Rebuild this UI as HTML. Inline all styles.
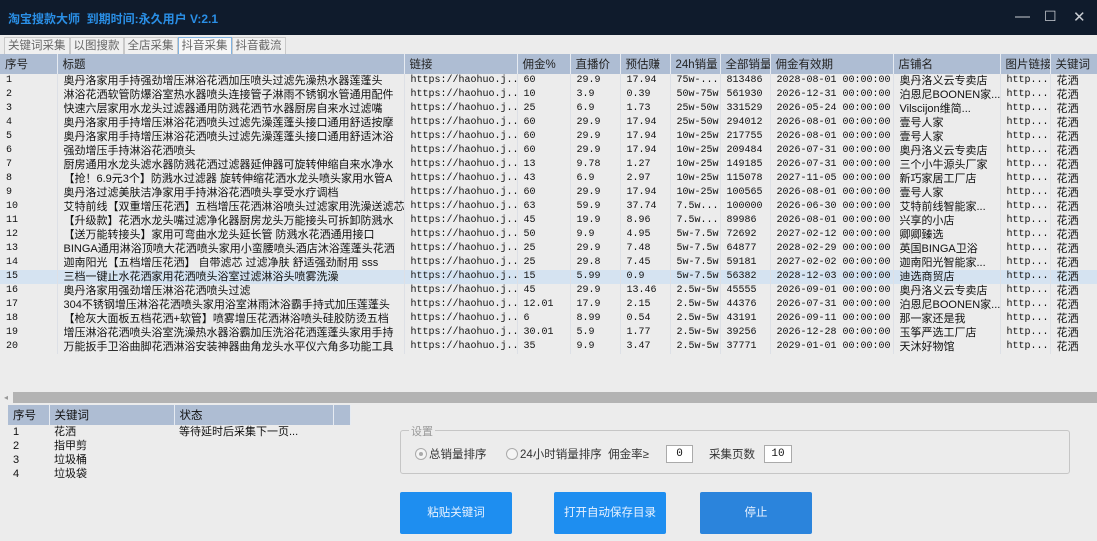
<!DOCTYPE html>
<html><head><meta charset="utf-8"><style>
*{margin:0;padding:0;box-sizing:border-box}
body{width:1097px;height:541px;overflow:hidden;background:#ececec;font-family:"Liberation Sans","Noto Sans CJK SC",sans-serif;position:relative;color:#111}
.tb{position:absolute;left:0;top:0;width:1097px;height:35px;background:#0f1b2c}
.tb .t{position:absolute;left:8px;top:10px;color:#2a8fe6;font-size:12px;font-weight:bold}
.tb .c{position:absolute;top:8px;color:#c8ccd2;font-size:15px}
.tabs{position:absolute;left:4px;top:37px;height:17px;display:flex}
.tabs div{border:1px solid #c9c9c9;border-bottom:none;font-size:11.5px;color:#666;padding:0 3px;height:17px;line-height:16px;background:#f0f0f0}
.tabs .a{border-color:#7fb2e0;background:#f7f7f7}
table{border-collapse:collapse;table-layout:fixed;position:absolute;font-size:12px}
th,td{white-space:nowrap;overflow:hidden}
#m{left:0;top:54px;width:1097px}
#m th{background:#aebdd3;font-weight:normal;text-align:left;height:20px;padding-left:5px;border-right:1px solid #e6ebf2;font-size:11.5px;color:#222}
#m td{height:14px;line-height:14px;padding-left:6px;border-right:1px solid #dde0e6;font-size:10px;font-family:"Liberation Mono","Noto Sans CJK SC",monospace}
#m td.z{font-family:"Liberation Sans","Noto Sans CJK SC",sans-serif;font-size:11px}
#m tr.s td{background:#d5e3f1}
.sb{position:absolute;left:13px;top:392px;width:1084px;height:11px;background:#b3b3b3}
#k{left:8px;top:405px;width:342px}
#k th{background:#aebdd3;font-weight:normal;text-align:left;height:20px;padding-left:5px;border-right:1px solid #e6ebf2;font-size:11.5px}
#k td{height:14px;line-height:14px;padding-left:5px;font-size:11px}
.gb{position:absolute;left:400px;top:430px;width:670px;height:44px;border:1px solid #c6c6c6;border-radius:3px}
.gb .l{position:absolute;left:8px;top:-8px;background:#ececec;font-size:11px;color:#999;padding:0 2px}
.gb .r{position:absolute;top:15px;font-size:11.5px;color:#333}
.rd{display:inline-block;width:12px;height:12px;border:1px solid #aaa;border-radius:50%;vertical-align:-2px;margin-right:2px;position:relative;background:#f4f4f4}
.rd.on:after{content:"";position:absolute;left:3px;top:3px;width:4px;height:4px;border-radius:50%;background:#aaa}
.in{position:absolute;top:14px;height:18px;border:1px solid #aaa;background:#fff;font-size:11px;text-align:center;line-height:16px;font-family:"Liberation Mono",monospace}
.btn{position:absolute;top:492px;width:112px;height:42px;background:#1e8ef0;color:#e8f2ff;font-size:11.5px;text-align:center;line-height:42px;border-radius:2px}
</style></head><body>
<div class="tb"><div class="t">淘宝搜款大师&nbsp; 到期时间:永久用户 V:2.1</div>
<div class="c" style="left:1015px">—</div><div class="c" style="left:1044px;font-size:14px">☐</div><div class="c" style="left:1073px">✕</div></div>
<div class="tabs"><div>关键词采集</div><div>以图搜款</div><div>全店采集</div><div class="a">抖音采集</div><div>抖音截流</div></div>
<table id="m">
<colgroup><col style="width:57px"><col style="width:347px"><col style="width:113px"><col style="width:53px"><col style="width:50px"><col style="width:50px"><col style="width:50px"><col style="width:50px"><col style="width:123px"><col style="width:107px"><col style="width:50px"><col style="width:47px"></colgroup>
<tr><th>序号</th><th>标题</th><th>链接</th><th>佣金%</th><th>直播价</th><th>预估赚</th><th>24h销量</th><th>全部销量</th><th>佣金有效期</th><th>店铺名</th><th>图片链接</th><th>关键词</th></tr>
<tr><td>1</td><td class="z">奥丹洛家用手持强劲增压淋浴花洒加压喷头过滤先澡热水器莲蓬头</td><td>https://haohuo.j...</td><td>60</td><td>29.9</td><td>17.94</td><td>75w-...</td><td>813486</td><td>2028-08-01 00:00:00</td><td class="z">奥丹洛义云专卖店</td><td>http...</td><td class="z">花洒</td></tr>
<tr><td>2</td><td class="z">淋浴花洒软管防爆浴室热水器喷头连接管子淋雨不锈钢水管通用配件</td><td>https://haohuo.j...</td><td>10</td><td>3.9</td><td>0.39</td><td>50w-75w</td><td>561930</td><td>2026-12-31 00:00:00</td><td class="z">泊恩尼BOONEN家...</td><td>http...</td><td class="z">花洒</td></tr>
<tr><td>3</td><td class="z">快速六层家用水龙头过滤器通用防溅花洒节水器厨房自来水过滤嘴</td><td>https://haohuo.j...</td><td>25</td><td>6.9</td><td>1.73</td><td>25w-50w</td><td>331529</td><td>2026-05-24 00:00:00</td><td class="z">Vilscijon维简...</td><td>http...</td><td class="z">花洒</td></tr>
<tr><td>4</td><td class="z">奥丹洛家用手持增压淋浴花洒喷头过滤先澡莲蓬头接口通用舒适按摩</td><td>https://haohuo.j...</td><td>60</td><td>29.9</td><td>17.94</td><td>25w-50w</td><td>294012</td><td>2026-08-01 00:00:00</td><td class="z">壹号人家</td><td>http...</td><td class="z">花洒</td></tr>
<tr><td>5</td><td class="z">奥丹洛家用手持增压淋浴花洒喷头过滤先澡莲蓬头接口通用舒适沐浴</td><td>https://haohuo.j...</td><td>60</td><td>29.9</td><td>17.94</td><td>10w-25w</td><td>217755</td><td>2026-08-01 00:00:00</td><td class="z">壹号人家</td><td>http...</td><td class="z">花洒</td></tr>
<tr><td>6</td><td class="z">强劲增压手持淋浴花洒喷头</td><td>https://haohuo.j...</td><td>60</td><td>29.9</td><td>17.94</td><td>10w-25w</td><td>209484</td><td>2026-07-31 00:00:00</td><td class="z">奥丹洛义云专卖店</td><td>http...</td><td class="z">花洒</td></tr>
<tr><td>7</td><td class="z">厨房通用水龙头滤水器防溅花洒过滤器延伸器可旋转伸缩自来水净水</td><td>https://haohuo.j...</td><td>13</td><td>9.78</td><td>1.27</td><td>10w-25w</td><td>149185</td><td>2026-07-31 00:00:00</td><td class="z">三个小牛源头厂家</td><td>http...</td><td class="z">花洒</td></tr>
<tr><td>8</td><td class="z">【抢！6.9元3个】防溅水过滤器 旋转伸缩花洒水龙头喷头家用水管A</td><td>https://haohuo.j...</td><td>43</td><td>6.9</td><td>2.97</td><td>10w-25w</td><td>115078</td><td>2027-11-05 00:00:00</td><td class="z">新巧家居工厂店</td><td>http...</td><td class="z">花洒</td></tr>
<tr><td>9</td><td class="z">奥丹洛过滤美肤洁净家用手持淋浴花洒喷头享受水疗调档</td><td>https://haohuo.j...</td><td>60</td><td>29.9</td><td>17.94</td><td>10w-25w</td><td>100565</td><td>2026-08-01 00:00:00</td><td class="z">壹号人家</td><td>http...</td><td class="z">花洒</td></tr>
<tr><td>10</td><td class="z">艾特前线【双重增压花洒】五档增压花洒淋浴喷头过滤家用洗澡送滤芯</td><td>https://haohuo.j...</td><td>63</td><td>59.9</td><td>37.74</td><td>7.5w...</td><td>100000</td><td>2026-06-30 00:00:00</td><td class="z">艾特前线智能家...</td><td>http...</td><td class="z">花洒</td></tr>
<tr><td>11</td><td class="z">【升级款】花洒水龙头嘴过滤净化器厨房龙头万能接头可拆卸防溅水</td><td>https://haohuo.j...</td><td>45</td><td>19.9</td><td>8.96</td><td>7.5w...</td><td>89986</td><td>2026-08-01 00:00:00</td><td class="z">兴享的小店</td><td>http...</td><td class="z">花洒</td></tr>
<tr><td>12</td><td class="z">【送万能转接头】家用可弯曲水龙头延长管 防溅水花洒通用接口</td><td>https://haohuo.j...</td><td>50</td><td>9.9</td><td>4.95</td><td>5w-7.5w</td><td>72692</td><td>2027-02-12 00:00:00</td><td class="z">卿卿臻选</td><td>http...</td><td class="z">花洒</td></tr>
<tr><td>13</td><td class="z">BINGA通用淋浴顶喷大花洒喷头家用小蛮腰喷头酒店沐浴莲蓬头花洒</td><td>https://haohuo.j...</td><td>25</td><td>29.9</td><td>7.48</td><td>5w-7.5w</td><td>64877</td><td>2028-02-29 00:00:00</td><td class="z">英国BINGA卫浴</td><td>http...</td><td class="z">花洒</td></tr>
<tr><td>14</td><td class="z">迦南阳光【五档增压花洒】 自带滤芯 过滤净肤 舒适强劲耐用 sss</td><td>https://haohuo.j...</td><td>25</td><td>29.8</td><td>7.45</td><td>5w-7.5w</td><td>59181</td><td>2027-02-02 00:00:00</td><td class="z">迦南阳光智能家...</td><td>http...</td><td class="z">花洒</td></tr>
<tr class="s"><td>15</td><td class="z">三档一键止水花洒家用花洒喷头浴室过滤淋浴头喷雾洗澡</td><td>https://haohuo.j...</td><td>15</td><td>5.99</td><td>0.9</td><td>5w-7.5w</td><td>56382</td><td>2028-12-03 00:00:00</td><td class="z">迪选商贸店</td><td>http...</td><td class="z">花洒</td></tr>
<tr><td>16</td><td class="z">奥丹洛家用强劲增压淋浴花洒喷头过滤</td><td>https://haohuo.j...</td><td>45</td><td>29.9</td><td>13.46</td><td>2.5w-5w</td><td>45555</td><td>2026-09-01 00:00:00</td><td class="z">奥丹洛义云专卖店</td><td>http...</td><td class="z">花洒</td></tr>
<tr><td>17</td><td class="z">304不锈钢增压淋浴花洒喷头家用浴室淋雨沐浴霸手持式加压莲蓬头</td><td>https://haohuo.j...</td><td>12.01</td><td>17.9</td><td>2.15</td><td>2.5w-5w</td><td>44376</td><td>2026-07-31 00:00:00</td><td class="z">泊恩尼BOONEN家...</td><td>http...</td><td class="z">花洒</td></tr>
<tr><td>18</td><td class="z">【枪灰大面板五档花洒+软管】喷雾增压花洒淋浴喷头硅胶防烫五档</td><td>https://haohuo.j...</td><td>6</td><td>8.99</td><td>0.54</td><td>2.5w-5w</td><td>43191</td><td>2026-09-11 00:00:00</td><td class="z">那一家还是我</td><td>http...</td><td class="z">花洒</td></tr>
<tr><td>19</td><td class="z">增压淋浴花洒喷头浴室洗澡热水器浴霸加压洗浴花洒莲蓬头家用手持</td><td>https://haohuo.j...</td><td>30.01</td><td>5.9</td><td>1.77</td><td>2.5w-5w</td><td>39256</td><td>2026-12-28 00:00:00</td><td class="z">玉筝严选工厂店</td><td>http...</td><td class="z">花洒</td></tr>
<tr><td>20</td><td class="z">万能扳手卫浴曲脚花洒淋浴安装神器曲角龙头水平仪六角多功能工具</td><td>https://haohuo.j...</td><td>35</td><td>9.9</td><td>3.47</td><td>2.5w-5w</td><td>37771</td><td>2029-01-01 00:00:00</td><td class="z">天沐好物馆</td><td>http...</td><td class="z">花洒</td></tr>
</table>
<div class="sb"></div>
<div style="position:absolute;left:4px;top:393px;font-size:8px;color:#999">◂</div>
<table id="k">
<colgroup><col style="width:41px"><col style="width:125px"><col style="width:159px"><col style="width:17px"></colgroup>
<tr><th>序号</th><th>关键词</th><th>状态</th><th></th></tr>
<tr><td>1</td><td>花洒</td><td>等待延时后采集下一页...</td><td></td></tr>
<tr><td>2</td><td>指甲剪</td><td></td><td></td></tr>
<tr><td>3</td><td>垃圾桶</td><td></td><td></td></tr>
<tr><td>4</td><td>垃圾袋</td><td></td><td></td></tr>
</table>
<div class="gb"><div class="l">设置</div>
<div class="r" style="left:14px"><span class="rd on"></span>总销量排序</div>
<div class="r" style="left:105px"><span class="rd"></span>24小时销量排序&nbsp; 佣金率≥</div>
<div class="in" style="left:265px;width:27px">0</div>
<div class="r" style="left:308px">采集页数</div>
<div class="in" style="left:363px;width:28px">10</div>
</div>
<div class="btn" style="left:400px">粘贴关键词</div>
<div class="btn" style="left:554px">打开自动保存目录</div>
<div class="btn" style="left:700px;background:#2b84dc">停止</div>
</body></html>
